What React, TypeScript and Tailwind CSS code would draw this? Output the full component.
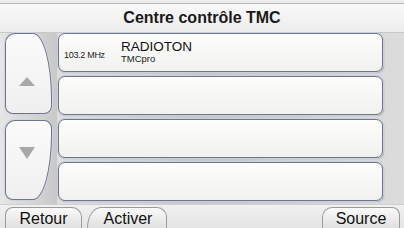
import React from 'react'

const rowCls =
  'h-[39px] rounded-[7px] border border-[#6f7686] bg-gradient-to-b from-[#fdfdfc] to-[#f1f1ef] shadow-[0_0_0_1px_#c9cfe0,1px_1px_1px_#8a8f9a]'

function Row({ children }: { children?: React.ReactNode }) {
  return <div className={rowCls + ' flex items-start'}>{children}</div>
}

function TabButton({ label, className }: { label: string; className: string }) {
  return (
    <div
      className={
        'h-[21px] flex items-center justify-center border border-[#9a9a9a] border-b-0 bg-gradient-to-b from-[#fafafa] to-[#e0e0e0] text-[16px] leading-none text-[#111] pt-[1px] ' +
        className
      }
    >
      {label}
    </div>
  )
}

export default function App() {
  return (
    <div
      className="w-[404px] h-[228px] overflow-hidden flex flex-col bg-[#ececec]"
      style={{ fontFamily: '"Liberation Sans", Arial, sans-serif' }}
    >
      {/* Title */}
      <div className="h-[30px] mt-[3px] border-t border-[#b8b8b8] border-b border-b-[#c8c8c8] bg-gradient-to-b from-[#f8f8f8] to-[#ededed] flex items-center justify-center">
        <span className="text-[16px] font-bold text-[#1a1a1a]">Centre contrôle TMC</span>
      </div>

      {/* Body */}
      <div className="h-[171px] flex bg-gradient-to-r from-[#e6e6e6] via-[#cacaca] to-[#dcdcdc]">
        <div className="w-[57px] pl-[5px] pr-[5px] flex flex-col gap-[6px] bg-gradient-to-r from-[#e6e6e6] to-[#c8c8c8]">
          <div className="h-[81px] rounded-tl-[10px] rounded-bl-[8px] rounded-br-[8px] rounded-tr-[19px_66px] border border-[#6f7686] bg-gradient-to-b from-[#fbfbfb] to-[#efefef] shadow-[0_0_0_1px_#cdd3e2] flex items-center justify-center">
            <div className="w-0 h-0 border-l-[8px] border-r-[8px] border-b-[9px] border-l-transparent border-r-transparent border-b-[#a8a8a8] mr-[4px] mt-[16px]" />
          </div>
          <div className="h-[80px] rounded-tl-[10px] rounded-bl-[8px] rounded-tr-[8px] rounded-br-[19px_66px] border border-[#6f7686] bg-gradient-to-b from-[#fbfbfb] to-[#efefef] shadow-[0_0_0_1px_#cdd3e2] flex items-center justify-center">
            <div className="w-0 h-0 border-l-[8px] border-r-[8px] border-t-[12px] border-l-transparent border-r-transparent border-t-[#a8a8a8] mr-[3px] mb-[14px]" />
          </div>
        </div>

        <div className="w-[325px] ml-[1px] flex flex-col gap-[4px]">
          <Row>
            <span className="text-[9px] tracking-[-0.3px] text-[#222] ml-[5px] mt-[15px] w-[57px]">103.2 MHz</span>
            <div className="flex flex-col mt-[6px]">
              <span className="text-[13.5px] leading-[14px] text-[#111]">RADIOTON</span>
              <span className="text-[9.5px] leading-[10px] text-[#222]">TMCpro</span>
            </div>
          </Row>
          <Row />
          <Row />
          <Row />
        </div>
      </div>

      {/* Bottom bar */}
      <div className="flex-1 flex items-end border-t border-[#d0d0d0] bg-gradient-to-b from-[#f0f0f0] to-[#e4e4e4]">
        <TabButton label="Retour" className="w-[77px] ml-[5px] rounded-tl-[8px] rounded-tr-[10px]" />
        <TabButton
          label="Activer"
          className="w-[80px] ml-[5px] rounded-tr-[10px] rounded-tl-[14px_21px] pl-[2px]"
        />
        <div className="flex-1" />
        <TabButton label="Source" className="w-[78px] mr-[4px] rounded-tl-[10px] rounded-tr-[8px]" />
      </div>
    </div>
  )
}
